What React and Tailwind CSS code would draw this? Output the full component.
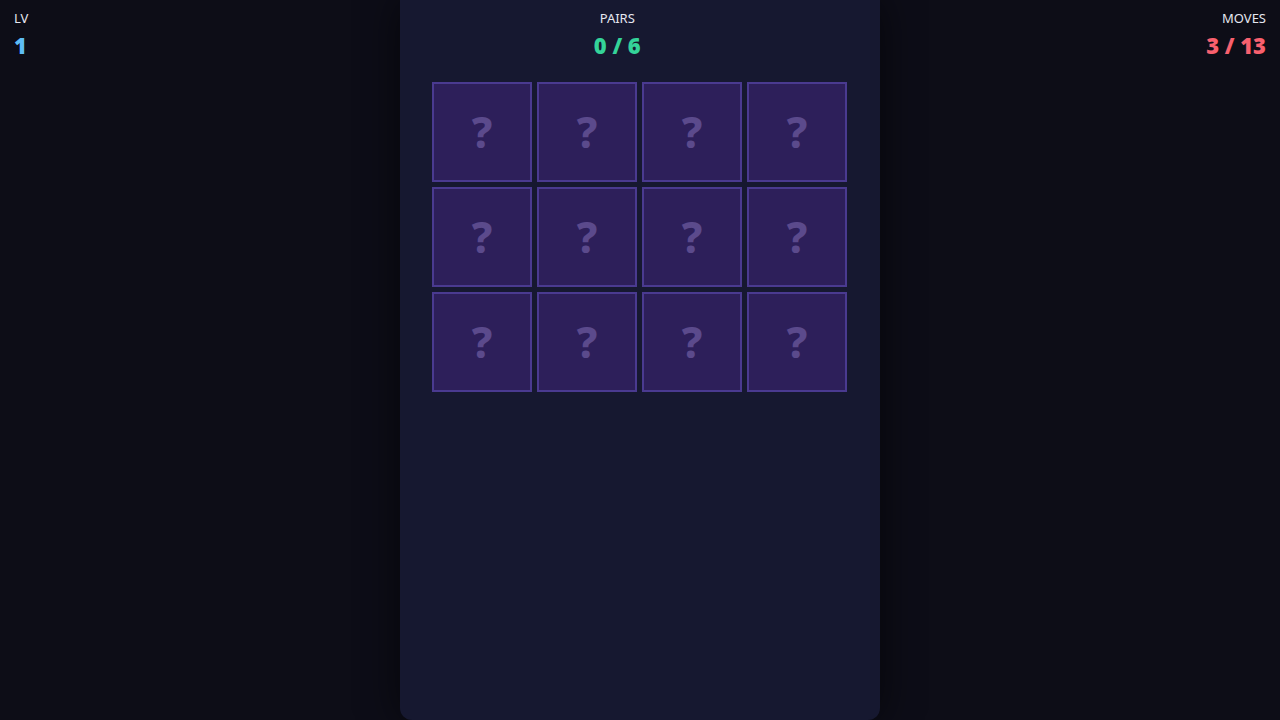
export default function App() {
  const cards = Array.from({ length: 12 }, (_, i) => i);

  return (
    <div
      className="relative w-full h-[720px] bg-[#0d0d17] overflow-hidden flex justify-center"
      style={{ fontFamily: '"Noto Sans", "Open Sans", sans-serif' }}
    >
      {/* Board panel */}
      <div className="w-[480px] h-[720px] bg-[#161830] rounded-b-xl shadow-[0_0_40px_rgba(0,0,0,0.6)] flex flex-col items-center pt-[82px]">
        <div className="grid grid-cols-4 gap-[5px] mr-[1px]">
          {cards.map((i) => (
            <div
              key={i}
              className="w-[100px] h-[100px] bg-[#2d1f5a] border-2 border-[#4a3a90] flex items-center justify-center"
            >
              <span className="text-[42px] font-extrabold text-[#5b4a8c] leading-none">?</span>
            </div>
          ))}
        </div>
      </div>

      {/* HUD */}
      <div className="absolute top-0 left-0 right-0 flex justify-between px-[14px] pt-[9px]">
        <div className="flex flex-col items-start">
          <span className="text-[13px] text-[#e5e7f0] leading-[18px]">LV</span>
          <span className="text-[22px] font-black text-[#5ebcf5] leading-[36px]">1</span>
        </div>
        <div className="flex flex-col items-center">
          <span className="text-[13px] text-[#e5e7f0] leading-[18px]">PAIRS</span>
          <span className="text-[22px] font-black text-[#34d399] leading-[36px]">0 / 6</span>
        </div>
        <div className="flex flex-col items-end">
          <span className="text-[13px] text-[#e5e7f0] leading-[18px]">MOVES</span>
          <span className="text-[22px] font-black text-[#f8606e] leading-[36px]">3 / 13</span>
        </div>
      </div>
    </div>
  );
}
